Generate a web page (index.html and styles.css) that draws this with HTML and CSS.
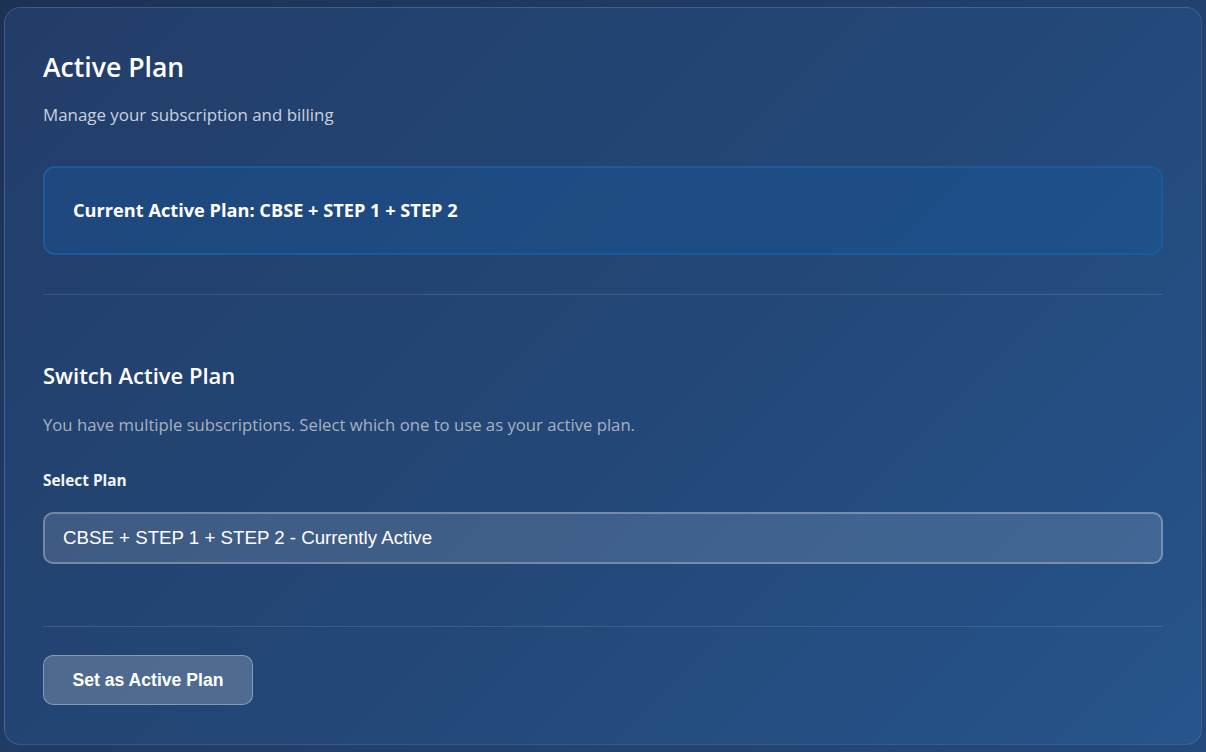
FILE: index.html
```html
<!DOCTYPE html>
<html lang="en">
<head>
<meta charset="utf-8">
<title>Active Plan</title>
<link rel="stylesheet" href="styles.css">
</head>
<body>
<main class="card">
  <header class="head">
    <h1 class="title">Active Plan</h1>
    <p class="subtitle">Manage your subscription and billing</p>
  </header>
  <div class="current">Current Active Plan: CBSE + STEP 1 + STEP 2</div>
  <hr class="divider first">
  <section class="switch">
    <h2 class="switch-title">Switch Active Plan</h2>
    <p class="switch-desc">You have multiple subscriptions. Select which one to use as your active plan.</p>
    <label class="label" for="plan">Select Plan</label>
    <div class="select" id="plan">CBSE + STEP 1 + STEP 2 - Currently Active</div>
  </section>
  <hr class="divider second">
  <div class="actions">
    <button class="btn" type="button">Set as Active Plan</button>
  </div>
</main>
</body>
</html>
```

FILE: styles.css
```css
* { box-sizing: border-box; }
html, body { height: 100%; }
body {
  margin: 0;
  padding: 7px 4px;
  background: linear-gradient(135deg, #1d3154 0%, #22416d 60%, #24497c 100%);
  font-family: "Open Sans", "Noto Sans", sans-serif;
  color: #ffffff;
  overflow: hidden;
}
.card {
  height: 738px;
  border: 1px solid rgba(255, 255, 255, 0.12);
  border-radius: 16px;
  background: linear-gradient(135deg, #233d68 0%, #234878 55%, #26548c 100%);
  padding: 43px 38px 38px;
  display: flex;
  flex-direction: column;
}
.head { display: flex; flex-direction: column; gap: 20px; }
.title {
  margin: 0;
  font-size: 26.6px;
  line-height: 32px;
  font-weight: 600;
  color: #ffffff;
}
.subtitle {
  margin: 0;
  font-size: 16.9px;
  line-height: 24px;
  color: #c9d1de;
}
.current {
  margin-top: 39px;
  border: 2px solid #1b5a9c;
  border-radius: 12px;
  background: rgba(24, 90, 160, 0.35);
  padding: 30px 28px 31px;
  font-size: 18.2px;
  line-height: 24px;
  font-weight: 700;
}
.divider {
  margin: 0;
  border: 0;
  height: 1px;
  background: rgba(255, 255, 255, 0.12);
}
.divider.first { margin-top: 39px; }
.switch { display: flex; flex-direction: column; margin-top: 66px; }
.switch-title {
  margin: 0;
  font-size: 22px;
  line-height: 28px;
  font-weight: 600;
}
.switch-desc {
  margin: 24px 0 0;
  font-size: 16.7px;
  line-height: 24px;
  color: #a7b1c2;
}
.label {
  margin-top: 34px;
  font-size: 15.4px;
  line-height: 20px;
  font-weight: 700;
  color: #f2f5fa;
}
.select {
  margin-top: 21px;
  height: 52px;
  border: 2px solid rgba(255, 255, 255, 0.28);
  border-radius: 10px;
  background: rgba(255, 255, 255, 0.13);
  padding: 0 18px;
  display: flex;
  align-items: center;
  font-family: "Liberation Sans", Arial, sans-serif;
  font-size: 18.7px;
  color: #ffffff;
}
.divider.second { margin-top: 62px; }
.actions { margin-top: 28px; display: flex; }
.btn {
  height: 50px;
  padding: 0 28.5px;
  border: 1px solid rgba(255, 255, 255, 0.32);
  border-radius: 10px;
  background: rgba(255, 255, 255, 0.2);
  color: #ffffff;
  font-family: "Liberation Sans", Arial, sans-serif;
  font-size: 17.6px;
  font-weight: 700;
}
```
